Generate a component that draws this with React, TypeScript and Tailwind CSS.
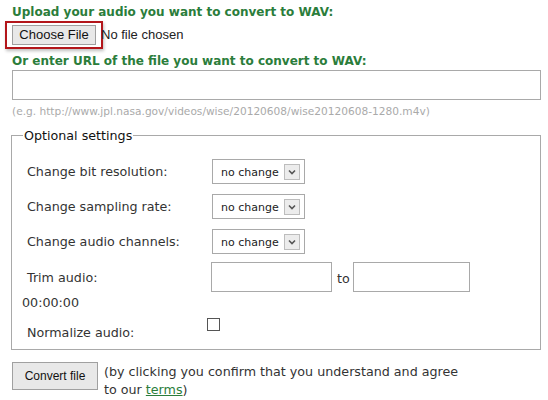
import React from 'react';

const verdana = { fontFamily: '"DejaVu Sans", Verdana, sans-serif' };
const arial = { fontFamily: '"Liberation Sans", Arial, sans-serif' };

const SelectBox: React.FC = () => (
  <div className="flex items-center h-[25px] w-[93px] border border-[#a9a9a9] bg-white pl-[8px] pr-[4px] text-[11px] text-[#222]">
    <span className="flex-1 whitespace-nowrap pt-[3px]">no change</span>
    <span className="flex items-center justify-center w-[16px] h-[16px] mt-[1px] border border-[#bdbdbd] bg-[#ececec]">
      <svg width="8" height="6" viewBox="0 0 8 6">
        <path d="M1 1.5 L4 4.5 L7 1.5" fill="none" stroke="#555" strokeWidth="1.6" />
      </svg>
    </span>
  </div>
);

const App: React.FC = () => {
  return (
    <div className="w-[548px] h-[400px] bg-white text-[12.7px] text-[#333] pl-[12px] pr-[7px]" style={verdana}>
      <h2 className="pt-[4px] text-[12px] font-bold text-[#2b7d3b] leading-[16px]">
        Upload your audio you want to convert to WAV:
      </h2>

      <div className="flex items-center h-[29px] -ml-[7px]">
        <div className="border-2 border-[#b3161b] px-[5px] py-[2px] shadow-[1px_2px_3px_rgba(0,0,0,0.25)]">
          <button
            className="h-[20px] w-[84px] border border-[#a0a0a0] bg-[#e8e8e8] text-[13px] text-[#111] leading-[18px]"
            style={arial}
          >
            Choose File
          </button>
        </div>
        <span className="ml-[-2px] text-[13px] text-[#222]" style={arial}>
          No file chosen
        </span>
      </div>

      <h2 className="mt-[4px] text-[12px] font-bold text-[#2b7d3b] leading-[16px]">
        Or enter URL of the file you want to convert to WAV:
      </h2>

      <input
        type="text"
        className="mt-[1px] block w-[529px] h-[30px] border border-[#a9a9a9] bg-white outline-none"
      />

      <p className="mt-[4px] text-[10.6px] text-[#aaa] leading-[14px]">
        (e.g. http://www.jpl.nasa.gov/videos/wise/20120608/wise20120608-1280.m4v)
      </p>

      <fieldset className="mt-[8px] w-[530px] h-[224px] border border-[#a9a9a9] pl-[10px] pr-[10px] -ml-[1px]">
        <legend className="ml-[1px] px-[1px] text-[12.7px] text-[#111]">Optional settings</legend>

        <div className="flex items-center mt-[14px] h-[25px]">
          <span className="w-[190px] pl-[5px]">Change bit resolution:</span>
          <SelectBox />
        </div>
        <div className="flex items-center mt-[10px] h-[25px]">
          <span className="w-[190px] pl-[5px]">Change sampling rate:</span>
          <SelectBox />
        </div>
        <div className="flex items-center mt-[10px] h-[25px]">
          <span className="w-[190px] pl-[5px]">Change audio channels:</span>
          <SelectBox />
        </div>

        <div className="flex items-center mt-[8px] h-[30px]">
          <span className="w-[189px] pl-[5px]">Trim audio:</span>
          <input type="text" className="w-[121px] h-[30px] border border-[#a9a9a9] bg-white outline-none" />
          <span className="ml-[5px] mr-[3px] mt-[3px]">to</span>
          <input type="text" className="w-[117px] h-[30px] border border-[#a9a9a9] bg-white outline-none" />
        </div>

        <div className="mt-[2px] h-[18px] leading-[18px]">00:00:00</div>

        <div className="flex items-start mt-[6px] h-[28px]">
          <span className="w-[185px] pl-[5px] mt-[5px]">Normalize audio:</span>
          <span className="w-[13px] h-[13px] border border-[#555] bg-white"></span>
        </div>
      </fieldset>

      <div className="flex mt-[11px]">
        <button
          className="h-[28px] w-[86px] border border-[#a0a0a0] bg-[#e8e8e8] text-[12px] text-[#111] mt-[1px]"
          style={arial}
        >
          Convert file
        </button>
        <p className="ml-[6px] pt-[2px] text-[12.7px] leading-[18px] text-[#333]">
          (by clicking you confirm that you understand and agree
          <br />
          to our <a className="underline text-[#2b7d3b]">terms</a>)
        </p>
      </div>
    </div>
  );
};

export default App;
